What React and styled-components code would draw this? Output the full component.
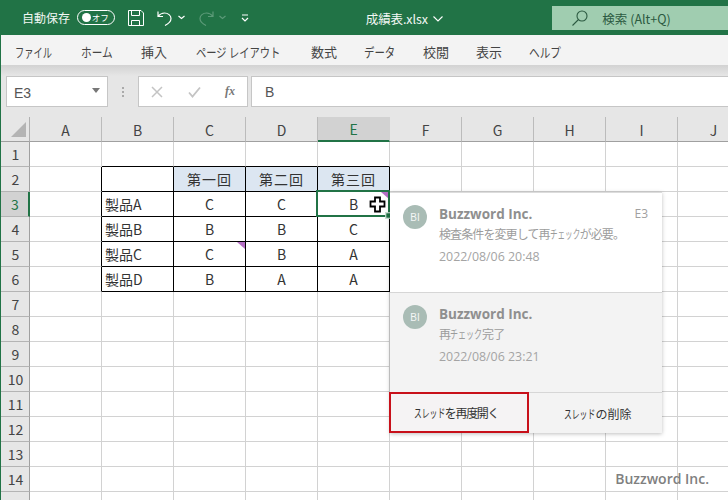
import React from "react";
import styled, { createGlobalStyle } from "styled-components";

const Global = createGlobalStyle`
  html, body { margin: 0; padding: 0; background: #fff; }
  * { box-sizing: border-box; }
`;
const CJK = `"Noto Sans CJK JP", "Noto Sans", sans-serif`;

const Win = styled.div`
  position: relative; width: 728px; height: 500px; overflow: hidden;
  border-left: 1px solid #217346; background: #e6e6e6; font-family: ${CJK};
  display: flex; flex-direction: column;
`;
const TitleBar = styled.div`
  height: 35px; flex: none; margin-left: -1px; background: #217346; color: #fff;
  display: flex; align-items: center; padding-left: 22px; position: relative;
`;
const AutoSave = styled.span`font-size: 12px; width: 55px; white-space: nowrap; color: #f2f7f4;`;
const Toggle = styled.span`
  width: 38px; height: 15px; border: 1px solid #fff; border-radius: 8px; display: flex; align-items: center;
  justify-content: flex-end; padding: 0 5px 0 0; font-size: 8.5px; position: relative; color: #fff; margin-right: 13px; margin-bottom: 1px;
  &::before { content: ""; position: absolute; left: 4px; top: 2px; width: 9px; height: 9px; border-radius: 50%; background: #fff; }
`;
const QuickIcon = styled.svg`flex: none; display: block; margin-left: ${(p) => p.$ml || 0}px;`;
const FileName = styled.div`
  font-size: 12.5px; margin-left: 117px; width: 187px; display: flex; align-items: center; gap: 5px; white-space: nowrap; margin-top: 2px;
  color: #f2f7f4; letter-spacing: -0.1px;
`;
const Search = styled.div`
  margin-left: auto; width: 176px; height: 24px; background: #a0cdb0; color: #2c5a41; font-size: 12.5px;
  display: flex; align-items: center; padding-left: 20px; gap: 14px; align-self: flex-start; margin-top: 6px;
`;
const Tabs = styled.div`
  height: 30px; flex: none; background: #f3f3f3; display: flex; align-items: center; padding: 2px 0 0 14px;
`;
const Tab = styled.span`
  font-size: 13px; color: #444; white-space: nowrap; flex: none;
  margin-right: ${(p) => p.$mr}px; width: ${(p) => p.$w}px;
  transform: scaleX(${(p) => p.$sx}); transform-origin: left center;
`;
const Shade = styled.div`height: 11px; flex: none; background: linear-gradient(#d2d2d2, #e6e6e6);`;
const FormulaBar = styled.div`height: 31px; flex: none; display: flex; align-items: stretch; padding-left: 5px;`;
const NameBox = styled.div`
  width: 102px; background: #fff; border: 1px solid #c6c6c6; display: flex; align-items: center; justify-content: space-between;
  font: 14px "Liberation Sans", sans-serif; color: #555; padding: 2px 7px 0 7px;
`;
const Caret = styled.span`width: 0; height: 0; border: 4px solid transparent; border-top: 5px solid #777; border-bottom: 0; margin-bottom: 4px;`;
const Dots = styled.div`
  width: 30px; display: flex; flex-direction: column; align-items: center; justify-content: center; gap: 2px;
  & > i { width: 2px; height: 2px; background: #aaa; display: block; }
`;
const FxBox = styled.div`
  width: 110px; background: #fff; border: 1px solid #c6c6c6; display: flex; align-items: center; justify-content: space-between; padding: 0 12px; margin-right: 3px;
`;
const Fx = styled.span`font: italic bold 12px "Liberation Serif", serif; color: #777;`;
const Input = styled.div`
  flex: 1; background: #fff; border: 1px solid #c6c6c6; border-right: 0; display: flex; align-items: center; padding-left: 13px;
  font: 14px "Liberation Sans", sans-serif; color: #555;
`;
const Gap = styled.div`height: 10px; flex: none;`;

const Sheet = styled.div`
  position: relative; flex: 1; display: grid; grid-template-columns: 29px repeat(10, 72px); grid-auto-rows: 25px; background: #fff; width: 749px;
`;
const Corner = styled.div`
  background: #e6e6e6; border-right: 1px solid #b0b0b0; border-bottom: 1px solid #a0a0a0; position: relative;
  &::after { content: ""; position: absolute; right: 3px; bottom: 4px; border-style: solid; border-width: 0 0 15px 15px; border-color: transparent transparent #b4b4b4 transparent; }
`;
const ColHead = styled.div`
  background: ${(p) => (p.$sel ? "#d2d2d2" : "#e6e6e6")}; color: ${(p) => (p.$sel ? "#217346" : "#444")};
  border-right: 1px solid ${(p) => (p.$sel ? "#d2d2d2" : "#bbb")};
  border-bottom: ${(p) => (p.$sel ? "2px solid #217346" : "1px solid #a0a0a0")};
  display: flex; align-items: center; justify-content: center; font-size: 14px; padding-top: 1px;
`;
const RowHead = styled.div`
  background: ${(p) => (p.$sel ? "#d2d2d2" : "#e6e6e6")}; color: ${(p) => (p.$sel ? "#217346" : "#444")};
  border-right: ${(p) => (p.$sel ? "2px solid #217346" : "1px solid #a0a0a0")};
  border-bottom: 1px solid #b4b4b4;
  display: flex; align-items: center; justify-content: center; font-size: 14px; padding-left: 1px;
`;
const Cell = styled.div`
  background: ${(p) => (p.$head ? "#dce6f1" : "#fff")}; color: #333; font-size: 14px; white-space: nowrap;
  border-right: 1px solid ${(p) => (p.$r ? "#000" : "#d2d2d2")};
  border-bottom: 1px solid ${(p) => (p.$b ? "#000" : "#d2d2d2")};
  display: flex; align-items: center; padding-left: ${(p) => (p.$left ? 3 : 0)}px; justify-content: ${(p) => (p.$left ? "flex-start" : "center")};
  letter-spacing: ${(p) => (p.$head ? 1 : 0)}px; position: relative;
`;
const Marker = styled.span`
  position: absolute; right: 0; top: 0; border-style: solid; border-width: 0 8px 7px 0; border-color: transparent #b46fc4 transparent transparent;
`;
const Selection = styled.div`
  position: absolute; left: 315px; top: 73px; width: 74px; height: 27px; border: 2px solid #217346;
  &::after { content: ""; position: absolute; right: -3px; bottom: -3px; width: 5px; height: 5px; background: #217346; border: 1px solid #fff; box-sizing: content-box; transform: translate(1px, 1px) scale(.9); }
`;
const Cursor = styled.svg`position: absolute; left: 368px; top: 79px;`;
const Card = styled.div`
  position: absolute; left: 389px; top: 75px; width: 272px; height: 241px; background: #fff; font-family: ${CJK};
  box-shadow: 0 1px 4px rgba(0, 0, 0, .25); border-top: 1px solid #dcdcdc; display: flex; flex-direction: column;
`;
const Thread = styled.div`
  height: ${(p) => p.$h}px; flex: none; display: flex; gap: 12px; padding: 12px 14px 0 13px; background: ${(p) => (p.$alt ? "#f3f3f3" : "#fff")};
  border-top: ${(p) => (p.$alt ? "1px solid #d6d6d6" : "0")};
`;
const Avatar = styled.div`
  width: 24px; height: 24px; flex: none; border-radius: 50%; background: #a9bcb5; color: #f4f6f5; font: 10px "Liberation Sans", sans-serif;
  display: flex; align-items: center; justify-content: center;
`;
const Body = styled.div`flex: 1; display: flex; flex-direction: column; min-width: 0;`;
const Head = styled.div`display: flex; justify-content: space-between; align-items: center; height: 17px;`;
const Author = styled.span`font: 700 13.500px "Open Sans", sans-serif; color: #8f8f8f;`;
const Ref = styled.span`font: 12px "Open Sans", sans-serif; color: #a0a0a0;`;
const Msg = styled.div`font-size: 12px; color: #9c9c9c; margin-top: 3px; height: 18px; line-height: 18px; white-space: nowrap; letter-spacing: -0.9px;`;
const Stamp = styled.div`font: 12.400px "Open Sans", sans-serif; color: #a4a4a4; margin-top: 5px; height: 18px; line-height: 18px;`;
const Squeeze = styled.span`
  display: inline-block; width: ${(p) => p.$w}px; white-space: nowrap; letter-spacing: 0;
  transform: scaleX(${(p) => p.$sx}); transform-origin: left center;
`;
const Actions = styled.div`flex: 1; display: flex; background: #f3f3f3; border-top: 1px solid #d6d6d6;`;
const Action = styled.div`
  width: ${(p) => p.$w}px; display: flex; align-items: center; justify-content: center; font-size: 12px; color: #333; white-space: nowrap;
  letter-spacing: ${(p) => p.$ls}px;
  padding: 0 ${(p) => (p.$marked ? 6 : 0)}px 0 ${(p) => (p.$marked ? 0 : 6)}px;
  ${(p) => p.$marked && "border: 2px solid #c8101a; margin-left: -1px; margin-top: -1px; background: #f5f3f4;"}
`;
const Mark = styled.div`
  position: absolute; right: 19px; bottom: 12px; font: 600 14px "Open Sans", sans-serif; color: #808080;
`;

const cols = "ABCDEFGHIJ".split("");
const rows = Array.from({ length: 15 }, (_, i) => i + 1);
const data = {
  2: ["", "第一回", "第二回", "第三回"],
  3: ["製品A", "C", "C", "B"],
  4: ["製品B", "B", "B", "C"],
  5: ["製品C", "C", "B", "A"],
  6: ["製品D", "B", "A", "A"],
};
const tabs = [
  ["ファイル", 37, 29, 0.71], ["ホーム", 32, 28, 0.82], ["挿入", 26, 29, 1], ["ページ レイアウト", 85, 30, 0.79], ["数式", 26, 27, 1],
  ["データ", 31, 28, 0.8], ["校閲", 25, 28, 1], ["表示", 26, 27, 1], ["ヘルプ", 32, 0, 0.82],
];

export default function App() {
  return (
    <Win>
      <Global />
      <TitleBar>
        <AutoSave>自動保存</AutoSave>
        <Toggle>オフ</Toggle>
        <QuickIcon width="16" height="16" viewBox="0 0 16 16" fill="none" stroke="#fff" strokeWidth="1">
          <path d="M.5.5h12.500l2.500 2.500v12.500H.5z" />
          <path d="M3.500.5v5h8v-5M3.500 15.500v-5h8v5" />
        </QuickIcon>
        <QuickIcon $ml={13} width="16" height="16" viewBox="0 0 16 16" fill="none" stroke="#fff" strokeWidth="1.200">
          <path d="M1 1.500v5h5M1 6.500c2-2.500 4-3.500 6.500-3.500C11 3 14 5.500 14 8.500S11 14 8 15.500" />
        </QuickIcon>
        <QuickIcon $ml={5} width="7" height="5" viewBox="0 0 7 5" fill="none" stroke="#fff" strokeWidth="1.200">
          <path d="M.5 1l3 2.500 3-2.500" />
        </QuickIcon>
        <QuickIcon $ml={13} width="16" height="16" viewBox="0 0 16 16" fill="none" stroke="#5c9a78" strokeWidth="1.200">
          <path d="M15 1.500v5h-5M15 6.500C13 4 11 3 8.500 3 5 3 2 5.500 2 8.500S5 14 8 15.500" />
        </QuickIcon>
        <QuickIcon $ml={5} width="7" height="5" viewBox="0 0 7 5" fill="none" stroke="#5c9a78" strokeWidth="1.200">
          <path d="M.5 1l3 2.500 3-2.500" />
        </QuickIcon>
        <QuickIcon $ml={15} width="8" height="8" viewBox="0 0 8 8" fill="none" stroke="#fff" strokeWidth="1.200">
          <path d="M1 1h6M1 4l3 3 3-3" />
        </QuickIcon>
        <FileName>
          成績表.xlsx
          <svg width="10" height="6" viewBox="0 0 10 6" fill="none" stroke="#fff" strokeWidth="1.100"><path d="M.5.500l4.500 4.500 4.500-4.500" /></svg>
        </FileName>
        <Search>
          <svg width="16" height="16" viewBox="0 0 16 16" fill="none" stroke="#2c5a41" strokeWidth="1.100">
            <circle cx="10" cy="6" r="5" /><path d="M6.500 9.500L.5 15.500" />
          </svg>
          検索 (Alt+Q)
        </Search>
      </TitleBar>
      <Tabs>
        {tabs.map(([t, w, mr, sx]) => <Tab key={t} $w={w} $mr={mr} $sx={sx}>{t}</Tab>)}
      </Tabs>
      <Shade />
      <FormulaBar>
        <NameBox>E3<Caret /></NameBox>
        <Dots><i /><i /><i /></Dots>
        <FxBox>
          <svg width="12" height="12" viewBox="0 0 12 12" stroke="#c4c4c4" strokeWidth="1.500" fill="none"><path d="M1 1l10 10M11 1L1 11" /></svg>
          <svg width="13" height="12" viewBox="0 0 13 12" stroke="#c4c4c4" strokeWidth="1.800" fill="none"><path d="M1 6.500l3.500 4L12 1.500" /></svg>
          <Fx>fx</Fx>
        </FxBox>
        <Input>B</Input>
      </FormulaBar>
      <Gap />
      <Sheet>
        <Corner />
        {cols.map((c) => <ColHead key={c} $sel={c === "E"}>{c}</ColHead>)}
        {rows.map((r) => (
          <React.Fragment key={r}>
            <RowHead $sel={r === 3}>{r}</RowHead>
            {cols.map((c, i) => {
              const inTable = i >= 1 && i <= 4;
              const value = data[r] && inTable ? data[r][i - 1] : "";
              const marked = (c === "C" && r === 5) || (c === "E" && r === 3);
              return (
                <Cell
                  key={c}
                  $r={r >= 2 && r <= 6 && i <= 4}
                  $b={inTable && r >= 1 && r <= 6}
                  $head={r === 2 && i >= 2 && i <= 4}
                  $left={i === 1}
                >
                  {value}
                  {marked && <Marker />}
                </Cell>
              );
            })}
          </React.Fragment>
        ))}
        <Selection />
        <Cursor width="17" height="17" viewBox="0 0 17 17">
          <path d="M6 1.500h5v4h4.500v5H11v5H6v-5H1.500v-5H6z" fill="#fff" stroke="#000" strokeWidth="1.800" />
        </Cursor>
        <Card>
          <Thread $h={99}>
            <Avatar>BI</Avatar>
            <Body>
              <Head><Author>Buzzword Inc.</Author><Ref>E3</Ref></Head>
              <Msg>検査条件を変更して再<Squeeze $w={30} $sx={0.63}>チェック</Squeeze>が必要。</Msg>
              <Stamp>2022/08/06 20:48</Stamp>
            </Body>
          </Thread>
          <Thread $h={100} $alt>
            <Avatar>BI</Avatar>
            <Body>
              <Head><Author>Buzzword Inc.</Author></Head>
              <Msg>再<Squeeze $w={32} $sx={0.67}>チェック</Squeeze>完了</Msg>
              <Stamp>2022/08/06 23:21</Stamp>
            </Body>
          </Thread>
          <Actions>
            <Action $w={140} $marked $ls={-1.300}><Squeeze $w={31} $sx={0.65}>スレッド</Squeeze>を再度開く</Action>
            <Action $w={132} $ls={0}><Squeeze $w={31} $sx={0.65}>スレッド</Squeeze>の削除</Action>
          </Actions>
        </Card>
      </Sheet>
      <Mark>Buzzword Inc.</Mark>
    </Win>
  );
}
